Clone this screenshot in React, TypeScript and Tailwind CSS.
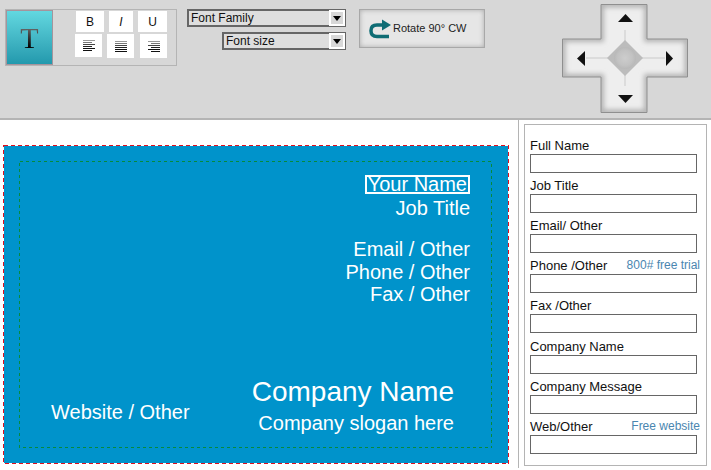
const arial = "font-['Liberation_Sans',Arial,sans-serif]";

const fields = [
  { label: "Full Name" },
  { label: "Job Title" },
  { label: "Email/ Other" },
  { label: "Phone /Other", hint: "800# free trial" },
  { label: "Fax /Other" },
  { label: "Company Name" },
  { label: "Company Message" },
  { label: "Web/Other", hint: "Free website" },
];

function AlignIcon({ mode }: { mode: "left" | "center" | "right" }) {
  const rows = [
    { w: 12, c: "#999" },
    { w: 9, c: "#777" },
    { w: 12, c: "#444" },
    { w: 9, c: "#222" },
    { w: 12, c: "#111" },
    { w: 9, c: "#111" },
  ];
  return (
    <svg width="12" height="11" viewBox="0 0 12 11">
      {rows.map((r, i) => {
        const full = mode === "center" ? 12 : r.w;
        const x = mode === "right" ? 12 - full : 0;
        return <rect key={i} x={x} y={i * 2} width={full} height="1" fill={r.c} />;
      })}
    </svg>
  );
}

function Select({ label, width }: { label: string; width: string }) {
  return (
    <div className={`flex h-[18px] items-center justify-between border-2 border-[#666] bg-[#dedede] pl-[2px] ${width}`}>
      <span className="text-xs leading-none text-[#111]">{label}</span>
      <span className="-mr-[1px] flex h-[16px] w-[16px] items-center justify-center border-2 border-white bg-[#d8d8d8]">
        <svg width="8" height="5" viewBox="0 0 8 5">
          <path d="M0 0h8L4 5z" fill="#000" />
        </svg>
      </span>
    </div>
  );
}

function RotateIcon() {
  return (
    <svg width="22" height="20" viewBox="0 0 22 20">
      <path d="M20 17.500H8Q2 17.500 2 12V11.500Q2 6 8 6H14" fill="none" stroke="#0e6c74" strokeWidth="3.500" />
      <path d="M13 0.500L22 6L13 11.500z" fill="#0e6c74" />
    </svg>
  );
}

function DPad() {
  const cross = "M39 0.500H85V35H125.500V73H85V108.500H39V73H0.500V35H39z";
  return (
    <svg width="126" height="109" viewBox="0 0 126 109">
      <defs>
        <filter id="soft" x="-20%" y="-20%" width="140%" height="140%">
          <feGaussianBlur stdDeviation="2.500" />
        </filter>
        <clipPath id="crossClip">
          <path d={cross} />
        </clipPath>
        <radialGradient id="hub">
          <stop offset="0" stopColor="#cdcdcd" />
          <stop offset="0.7" stopColor="#c2c2c2" />
          <stop offset="1" stopColor="#b8b8b8" />
        </radialGradient>
      </defs>
      <path d={cross} fill="#eeeeee" />
      <g clipPath="url(#crossClip)">
        <path d={cross} fill="none" stroke="#b2b2b2" strokeWidth="6" filter="url(#soft)" />
      </g>
      <path d={cross} fill="none" stroke="#8f8f8f" strokeWidth="1" />
      <path d="M63 26V82M24 54H103" stroke="#d6d6d6" strokeWidth="1.500" />
      <path d="M63 36L81 54L63 72L45 54z" fill="#bcbcbc" />
      <circle cx="63" cy="54" r="11" fill="url(#hub)" />
      <path d="M56 18L63.500 10L71 18z" fill="#111" />
      <path d="M56 91H71L63.500 99z" fill="#111" />
      <path d="M23 47V62L15 54.500z" fill="#111" />
      <path d="M104 47V62L111 54.500z" fill="#111" />
    </svg>
  );
}

function Toolbar() {
  return (
    <div className="flex h-[120px] border-b-2 border-[#b4b4b4] bg-[#d7d7d7]">
      <div className="mt-[9px] ml-[5px] flex h-[57px] w-[172px] border border-[#b4b4b4]">
        <div className="flex h-[55px] w-[47px] items-center justify-center border border-[#a5949c] bg-gradient-to-b from-[#62d8e0] to-[#2299ad]">
          <span className="bg-gradient-to-b from-[#888] to-[#000] bg-clip-text font-['Liberation_Serif',serif] text-[30px] leading-none text-transparent">T</span>
        </div>
        <div className="ml-[22px] flex flex-col gap-[2px] pt-[1px]">
          <div className="flex items-start text-xs text-[#111]">
            <span className="ml-[1px] flex h-[21px] w-[28px] items-center justify-center bg-white">B</span>
            <span className="ml-[5px] flex h-[21px] w-[24px] items-center justify-center bg-white italic">I</span>
            <span className="ml-[5px] flex h-[21px] w-[29px] items-center justify-center bg-white">U</span>
          </div>
          <div className="flex items-start">
            <span className="flex h-[23px] w-[27px] items-center justify-center bg-white">
              <AlignIcon mode="left" />
            </span>
            <span className="ml-[5px] flex h-[24px] w-[27px] items-center justify-center bg-white">
              <AlignIcon mode="center" />
            </span>
            <span className="ml-[6px] flex h-[24px] w-[27px] items-center justify-center bg-white">
              <AlignIcon mode="right" />
            </span>
          </div>
        </div>
      </div>

      <div className="mt-[9px] ml-[10px] flex w-[159px] flex-col items-end gap-[5px]">
        <Select label="Font Family" width="w-[159px]" />
        <Select label="Font size" width="w-[124px]" />
      </div>

      <div className="mt-[9px] ml-[13px] flex h-[39px] w-[126px] items-center gap-[2px] border border-[#a8a8a8] bg-[#e6e6e6] pl-[9px] shadow-[inset_0_0_5px_#aaa]">
        <RotateIcon />
        <span className="text-[11px] text-[#222]">Rotate 90° CW</span>
      </div>

      <div className="mt-[4px] ml-[77px]">
        <DPad />
      </div>
    </div>
  );
}

function Card() {
  return (
    <div className="relative mt-[25px] ml-[3px] h-[319px] w-[506px] border border-transparent bg-[#0093cb] bg-clip-padding text-[20px] leading-none text-white">
      {/* bleed and safe-area guides */}
      <svg className="absolute -top-px -left-px" width="506" height="319" shapeRendering="crispEdges">
        <rect x="0.500" y="0.500" width="505" height="318" fill="none" stroke="#e0101f" strokeDasharray="4 3" />
        <rect x="16.500" y="16.500" width="472" height="286" fill="none" stroke="#078a3c" strokeWidth="1" strokeDasharray="3 3" />
      </svg>
      <span className="absolute top-[29px] right-[38px] border-2 border-white px-[1px] leading-[15px]">Your Name</span>
      <span className="absolute top-[52px] right-[38px]">Job Title</span>
      <span className="absolute top-[93px] right-[38px]">Email / Other</span>
      <span className="absolute top-[116px] right-[38px]">Phone / Other</span>
      <span className="absolute top-[138px] right-[38px]">Fax / Other</span>
      <span className="absolute top-[232px] right-[54px] text-[28px]">Company Name</span>
      <span className="absolute top-[267px] right-[54px]">Company slogan here</span>
      <span className="absolute top-[256px] left-[47px]">Website / Other</span>
    </div>
  );
}

function Sidebar() {
  return (
    <div className="mt-[4px] ml-[5px] h-[342px] w-[183px] border border-[#b4b4b4] bg-white px-[5px] pt-[8px]">
      {fields.map((f, i) => (
        <div key={f.label} className={i === 5 ? "mt-[1px]" : ""}>
          <div className="flex h-[21px] items-center justify-between pt-[3px] text-[13px] leading-none text-[#111]">
            <span>{f.label}</span>
            {f.hint && <span className="mr-[1px] text-xs text-[#4a86b0]">{f.hint}</span>}
          </div>
          <div className="h-[19px] w-[167px] border border-[#666] bg-white" />
        </div>
      ))}
    </div>
  );
}

export default function App() {
  return (
    <div className={`h-[470px] w-[711px] overflow-hidden bg-white ${arial}`}>
      <Toolbar />
      <div className="flex">
        <div className="h-[348px] w-[519px] border-r border-[#b4b4b4]">
          <Card />
        </div>
        <Sidebar />
      </div>
    </div>
  );
}
